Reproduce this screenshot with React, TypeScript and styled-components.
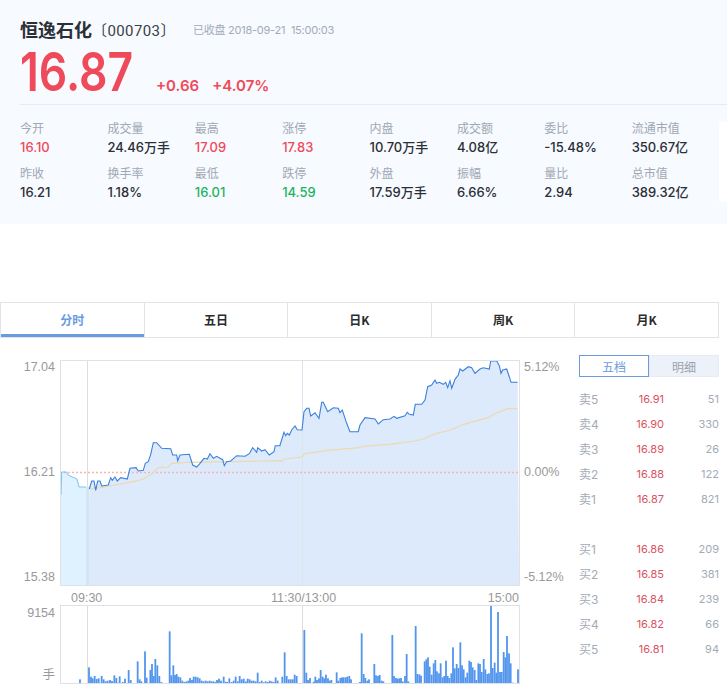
import styled, { createGlobalStyle } from "styled-components";

const DIN = `Inter, Roboto, "Noto Sans CJK SC", sans-serif`;
const ARIAL = `"Liberation Sans", "Noto Sans CJK SC", sans-serif`;

const stats = [
  [["今开", "16.10", "up"], ["昨收", "16.21", ""]],
  [["成交量", "24.46万手", ""], ["换手率", "1.18%", ""]],
  [["最高", "17.09", "up"], ["最低", "16.01", "down"]],
  [["涨停", "17.83", "up"], ["跌停", "14.59", "down"]],
  [["内盘", "10.70万手", ""], ["外盘", "17.59万手", ""]],
  [["成交额", "4.08亿", ""], ["振幅", "6.66%", ""]],
  [["委比", "-15.48%", ""], ["量比", "2.94", ""]],
  [["流通市值", "350.67亿", ""], ["总市值", "389.32亿", ""]],
];

const tabs = ["分时", "五日", "日K", "周K", "月K"];

const sells = [
  ["卖5", "16.91", "51"],
  ["卖4", "16.90", "330"],
  ["卖3", "16.89", "26"],
  ["卖2", "16.88", "122"],
  ["卖1", "16.87", "821"],
];
const buys = [
  ["买1", "16.86", "209"],
  ["买2", "16.85", "381"],
  ["买3", "16.84", "239"],
  ["买4", "16.82", "66"],
  ["买5", "16.81", "94"],
];

// traced from the reference, 3x crop coordinates
const lineA = [268,582,275,558,282,558,287,586,293,558,300,558,305,573,325,570,332,548,337,556,345,546,352,558,362,548,382,552,390,520,408,518,415,528,430,526,436,505,445,500,452,478,460,443,470,443,485,460,512,461,518,480,530,480,533,497,540,480,568,478,578,510,590,516,600,505,612,490,622,492,630,476,640,490,650,484,668,494,673,512,680,500,692,498,710,482,735,484,748,476,758,458,770,472,773,458,785,468,795,464,808,480,822,470,826,452,840,452];
const lineB = [0,300,12,262,17,272,22,265,28,270,35,255,45,243,52,254,66,255,72,200,80,190,87,190,92,213,105,203,117,220,125,172,130,172,143,200,160,188,175,190,180,203,187,195,200,235,210,260,235,260,240,240,255,218,285,222,295,237,310,224,330,222,342,214,350,220,375,212,382,202,388,208,400,210,406,178,425,178,435,165,443,125,455,120,465,105,470,115,478,112,490,118,497,112,503,128,510,107,515,130,525,103,535,90,540,72,548,78,565,65,575,68,585,85,600,72,610,68,628,72,632,48,650,48,658,62,663,85,668,75,680,72,688,95,693,112,713,112];
const avgA = [268,582,300,578,345,570,400,560,430,552,455,537,475,518,505,516,515,505,560,502,700,500,780,498,840,497];
const avgB = [0,350,15,342,66,336,75,325,100,323,140,316,240,308,250,304,330,298,405,288,430,282,470,265,510,256,550,238,625,218,650,203,685,191,713,191];
const preLine = [61,495,61.7,472,66.7,472,68,475,77,479,79,487,86,487];

const volA = [240,358,267,322,273,350,278,355,284,348,290,357,296,355,305,348,311,358,317,364,323,362,330,360,336,363,343,346,349,354,353,368,359,349,368,366,375,356,386,330,392,360,413,304,419,358,424,364,435,274,440,353,451,330,456,312,461,348,466,297,472,316,478,348,484,366,509,214,514,346,520,316,525,345,530,342,535,350,541,352,547,362,553,366,559,364,565,362,570,354,576,360,581,350,587,350,593,352,599,355,605,362,611,364,617,362,623,364,629,362,635,364,641,364,647,366,651,360,657,356,663,362,671,350,677,365,682,366,688,355,695,366,701,362,707,350,713,364,719,348,725,358,731,356,737,364,743,356,749,358,755,362,761,362,767,364,773,338,779,366,785,362,791,367,797,364,803,366,809,362,815,364,821,366,827,352,833,362];
const volB = [7,350,14,277,20,348,26,358,32,358,38,358,44,344,50,348,73,210,79,338,84,360,90,354,101,365,106,350,111,360,117,355,122,330,128,350,133,355,138,344,144,355,149,362,154,360,170,337,175,362,181,354,186,352,191,352,197,352,202,350,208,348,213,358,240,366,245,220,251,342,256,354,262,362,267,358,283,312,288,346,294,348,299,345,305,362,310,364,337,225,342,348,348,354,353,356,358,355,363,354,368,364,375,348,380,282,385,364,407,198,412,342,418,343,423,347,434,304,439,298,444,292,449,320,455,344,461,310,466,300,471,334,477,340,482,310,488,352,493,348,498,302,503,348,508,354,514,340,519,262,524,325,530,312,535,324,541,247,546,316,551,328,557,352,562,338,568,302,573,306,578,322,584,330,589,360,595,310,600,312,605,336,611,297,616,328,622,342,627,340,633,136,638,324,644,308,649,338,654,156,660,336,665,336,671,276,676,292,681,228,687,280,692,310,698,368,703,370,714,328];

const PLOT_X = 60;
const PLOT_Y = 360;

const toPairs = (raw: number[], ox: number, oy: number) => {
  const out: [number, number][] = [];
  for (let i = 0; i < raw.length; i += 2) {
    out.push([ox + raw[i] / 3 - PLOT_X, oy + raw[i + 1] / 3 - PLOT_Y]);
  }
  return out;
};

const mainPts = [...toPairs(lineA, 0, 295), ...toPairs(lineB, 280, 345)];
const avgPts = [...toPairs(avgA, 0, 295), ...toPairs(avgB, 280, 345)];
const prePts: [number, number][] = [];
for (let i = 0; i < preLine.length; i += 2) prePts.push([preLine[i] - PLOT_X, preLine[i + 1] - PLOT_Y]);

const str = (p: [number, number][]) => p.map(([x, y]) => `${x.toFixed(1)},${y.toFixed(1)}`).join(" ");

const volBars = (raw: number[], ox: number) => {
  const out: { x: number; y: number }[] = [];
  for (let i = 0; i < raw.length; i += 2) {
    out.push({ x: ox + raw[i] / 3 - PLOT_X, y: raw[i + 1] / 3 + 560 - 605 });
  }
  return out;
};

const PriceChart = () => (
  <svg width="460" height="226" viewBox="0 0 460 226" style={{ display: "block" }}>
    <polygon points={`${str(mainPts)} 459,225 28,225`} fill="#dceafc" />
    <polygon points={`${str(prePts)} 27,225 1,225`} fill="#dff2ff" />
    <rect x="26" y="127" width="3" height="98" fill="#d5e5f6" />
    <line x1="27.5" y1="0" x2="27.5" y2="127" stroke="#dddddd" />
    <line x1="242.5" y1="0" x2="242.5" y2="226" stroke="#dde3ea" />
    <line x1="0" y1="112.5" x2="460" y2="112.5" stroke="#f9b4b6" strokeWidth="1.5" strokeDasharray="2 2" />
    <polyline points={str(avgPts)} fill="none" stroke="#ecd9ae" strokeWidth="1.2" />
    <polyline points={str(prePts)} fill="none" stroke="#7cc3ef" strokeWidth="1" />
    <polyline points={str(mainPts)} fill="none" stroke="#3b80dc" strokeWidth="1.1" />
  </svg>
);

const VolumeChart = () => (
  <svg width="460" height="79" viewBox="0 0 460 79" style={{ display: "block" }}>
    <line x1="27.5" y1="0" x2="27.5" y2="79" stroke="#dddddd" />
    <line x1="242.5" y1="0" x2="242.5" y2="79" stroke="#dddddd" />
    {[...volBars(volA, 0), ...volBars(volB, 280)].map((b, i) => (
      <rect key={i} x={b.x - 0.9} y={b.y} width="1.8" height={Math.max(78 - b.y, 0)} fill="#5195ee" />
    ))}
  </svg>
);

export default function App() {
  return (
    <Page>
      <GlobalStyle />
      <Quote>
        <TitleRow>
          <StockName>恒逸石化</StockName>
          <StockCode>〔000703〕</StockCode>
          <StatusText>已收盘 2018-09-21&nbsp;&nbsp;15:00:03</StatusText>
        </TitleRow>
        <PriceRow>
          <BigPrice>16.87</BigPrice>
          <Change>+0.66</Change>
          <Change>+4.07%</Change>
        </PriceRow>
        <Divider />
        <StatsRow>
          <StatsGrid>
            {stats.map((col, i) => (
              <StatCol key={i}>
                {col.map(([label, value, tone]) => (
                  <Stat key={label}>
                    <StatLabel>{label}</StatLabel>
                    <StatValue $tone={tone}>{value}</StatValue>
                  </Stat>
                ))}
              </StatCol>
            ))}
          </StatsGrid>
          <EdgeBlock />
        </StatsRow>
      </Quote>

      <Tabs>
        {tabs.map((t, i) => (
          <Tab key={t} $active={i === 0}>{t}</Tab>
        ))}
      </Tabs>

      <Board>
        <Charts>
          <ChartRow>
            <AxisLeft>
              <span>17.04</span>
              <span>16.21</span>
              <span>15.38</span>
            </AxisLeft>
            <Plot>
              <PriceChart />
            </Plot>
            <AxisRight>
              <span>5.12%</span>
              <span>0.00%</span>
              <span>-5.12%</span>
            </AxisRight>
          </ChartRow>
          <TimeRow>
            <span>09:30</span>
            <span>11:30/13:00</span>
            <span>15:00</span>
          </TimeRow>
          <ChartRow>
            <VolAxis>
              <span>9154</span>
              <span>手</span>
            </VolAxis>
            <Plot>
              <VolumeChart />
            </Plot>
          </ChartRow>
        </Charts>

        <Depth>
          <DepthTabs>
            <DepthTab $active>五档</DepthTab>
            <DepthTab>明细</DepthTab>
          </DepthTabs>
          <DepthList>
            {sells.map(([l, p, v]) => (
              <DepthRow key={l}>
                <DepthLabel>{l}</DepthLabel>
                <DepthPrice>{p}</DepthPrice>
                <DepthVol>{v}</DepthVol>
              </DepthRow>
            ))}
          </DepthList>
          <DepthList>
            {buys.map(([l, p, v]) => (
              <DepthRow key={l}>
                <DepthLabel>{l}</DepthLabel>
                <DepthPrice>{p}</DepthPrice>
                <DepthVol>{v}</DepthVol>
              </DepthRow>
            ))}
          </DepthList>
        </Depth>
      </Board>
    </Page>
  );
}

const GlobalStyle = createGlobalStyle`
  html, body {
    margin: 0;
    padding: 0;
    background: #fff;
    overflow: hidden;
  }
`;

const Page = styled.div`
  width: 727px;
  height: 692px;
  overflow: hidden;
  font-family: ${DIN};
`;

const Quote = styled.div`
  height: 224px;
  box-sizing: border-box;
  padding: 17px 0 0 20px;
  background: #f7faff;
`;

const TitleRow = styled.div`
  display: flex;
  align-items: center;
  height: 24px;
`;

const StockName = styled.span`
  font-family: "Noto Sans CJK SC", sans-serif;
  font-size: 18px;
  font-weight: 700;
  color: #2b2f36;
`;

const StockCode = styled.span`
  width: 101px;
  font-size: 15px;
  font-weight: 400;
  color: #3a3f47;
  white-space: nowrap;
  font-family: Roboto, "Noto Sans CJK SC", sans-serif;
  letter-spacing: 0.4px;
`;

const StatusText = styled.span`
  font-size: 11px;
  letter-spacing: -0.25px;
  color: #a3abb6;
`;

const PriceRow = styled.div`
  display: flex;
  align-items: baseline;
  height: 63px;
`;

const BigPrice = styled.span`
  font-size: 53px;
  line-height: 63px;
  font-weight: 600;
  color: #ee4a5a;
  width: 136px;
  transform: scaleX(0.84);
  transform-origin: left center;
`;

const Change = styled.span`
  font-size: 15px;
  font-weight: 600;
  color: #ee4a5a;
  margin-right: 13px;
`;

const Divider = styled.div`
  height: 1px;
  background: #e6ebf2;
`;

const StatsRow = styled.div`
  display: flex;
  margin-top: 14px;
`;

const StatsGrid = styled.div`
  display: flex;
  width: 699px;
`;

const EdgeBlock = styled.div`
  flex: 1;
  height: 80px;
  background: #fff;
  margin-top: 3px;
`;

const StatCol = styled.div`
  width: 87.5px;
  display: flex;
  flex-direction: column;
  gap: 7px;
`;

const Stat = styled.div`
  display: flex;
  flex-direction: column;
`;

const StatLabel = styled.span`
  font-family: "Noto Sans CJK SC", sans-serif;
  font-size: 12px;
  line-height: 18px;
  color: #a0a8b3;
`;

const StatValue = styled.span<{ $tone?: string }>`
  margin-top: 1px;
  font-size: 13px;
  line-height: 19px;
  font-weight: 500;
  white-space: nowrap;
  color: ${(p) => (p.$tone === "up" ? "#ee4a5a" : p.$tone === "down" ? "#1db35e" : "#2b2f36")};
`;

const Tabs = styled.div`
  display: flex;
  width: 719px;
  height: 36px;
  box-sizing: border-box;
  margin-top: 78px;
  border: 1px solid #e2e4e8;
`;

const Tab = styled.div<{ $active?: boolean }>`
  flex: 1;
  display: flex;
  align-items: center;
  justify-content: center;
  padding-bottom: 2px;
  font-family: "Noto Sans CJK SC", sans-serif;
  font-size: 12px;
  font-weight: 700;
  color: ${(p) => (p.$active ? "#6a9ae0" : "#2b2b2b")};
  border-left: ${(p) => (p.$active ? "none" : "1px solid #e2e4e8")};
  box-shadow: ${(p) => (p.$active ? "inset 0 -3px 0 #6a9ae0" : "none")};
`;

const Board = styled.div`
  display: flex;
  width: 719px;
  margin-top: 17px;
`;

const Charts = styled.div`
  width: 579px;
  margin-top: 5px;
`;

const ChartRow = styled.div`
  display: flex;
`;

const AxisLeft = styled.div`
  width: 60px;
  box-sizing: border-box;
  padding: 0 5px 1px 0;
  display: flex;
  flex-direction: column;
  justify-content: space-between;
  align-items: flex-end;
  font-family: ${ARIAL};
  font-size: 12.5px;
  line-height: 15px;
  color: #999;
`;

const AxisRight = styled(AxisLeft)`
  width: 59px;
  padding: 0 0 1px 4px;
  align-items: flex-start;
`;

const VolAxis = styled(AxisLeft)`
  padding-top: 1px;
`;

const Plot = styled.div`
  width: 460px;
  outline: 1px solid #dfe1e4;
  outline-offset: -1px;
`;

const TimeRow = styled.div`
  display: grid;
  grid-template-columns: 200px 1fr auto;
  width: 448px;
  margin-left: 71px;
  height: 19px;
  font-family: ${ARIAL};
  font-size: 12.5px;
  line-height: 24px;
  color: #999;
`;

const Depth = styled.div`
  width: 140px;
`;

const DepthTabs = styled.div`
  display: flex;
  height: 22px;
`;

const DepthTab = styled.div<{ $active?: boolean }>`
  width: 70px;
  box-sizing: border-box;
  display: flex;
  align-items: center;
  justify-content: center;
  font-family: "Noto Sans CJK SC", sans-serif;
  font-size: 12px;
  color: ${(p) => (p.$active ? "#6a9ae0" : "#9aa3ae")};
  background: ${(p) => (p.$active ? "#fff" : "#edf1f9")};
  border: 1px solid ${(p) => (p.$active ? "#6a9ae0" : "#e6ebf4")};
`;

const DepthList = styled.div`
  margin-top: 9px;
  & + & {
    margin-top: 25px;
  }
`;

const DepthRow = styled.div`
  display: flex;
  height: 25px;
  align-items: center;
  font-size: 11px;
  color: #a3abb6;
`;

const DepthLabel = styled.span`
  width: 30px;
  font-size: 12px;
`;

const DepthPrice = styled.span`
  width: 55px;
  text-align: right;
  color: #d9535f;
`;

const DepthVol = styled.span`
  flex: 1;
  text-align: right;
`;
